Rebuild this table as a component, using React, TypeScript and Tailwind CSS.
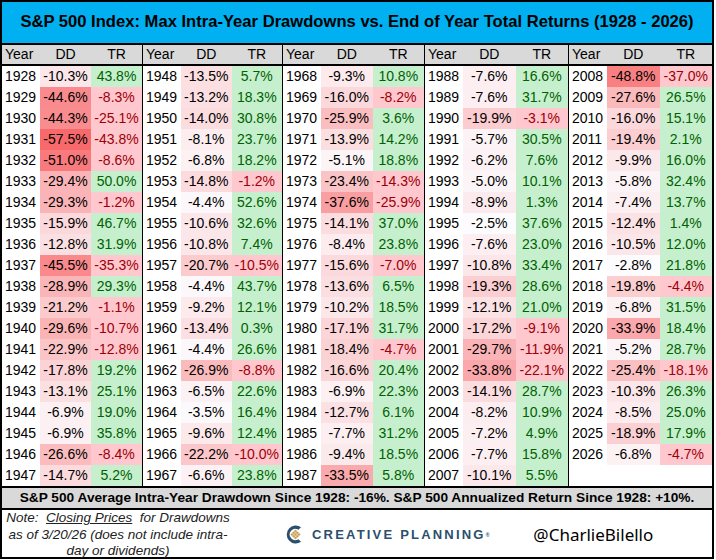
import React from 'react'

type Row = [number, number, number]

const DATA: Row[] = [
  [1928, -10.3, 43.8], [1929, -44.6, -8.3], [1930, -44.3, -25.1], [1931, -57.5, -43.8],
  [1932, -51.0, -8.6], [1933, -29.4, 50.0], [1934, -29.3, -1.2], [1935, -15.9, 46.7],
  [1936, -12.8, 31.9], [1937, -45.5, -35.3], [1938, -28.9, 29.3], [1939, -21.2, -1.1],
  [1940, -29.6, -10.7], [1941, -22.9, -12.8], [1942, -17.8, 19.2], [1943, -13.1, 25.1],
  [1944, -6.9, 19.0], [1945, -6.9, 35.8], [1946, -26.6, -8.4], [1947, -14.7, 5.2],
  [1948, -13.5, 5.7], [1949, -13.2, 18.3], [1950, -14.0, 30.8], [1951, -8.1, 23.7],
  [1952, -6.8, 18.2], [1953, -14.8, -1.2], [1954, -4.4, 52.6], [1955, -10.6, 32.6],
  [1956, -10.8, 7.4], [1957, -20.7, -10.5], [1958, -4.4, 43.7], [1959, -9.2, 12.1],
  [1960, -13.4, 0.3], [1961, -4.4, 26.6], [1962, -26.9, -8.8], [1963, -6.5, 22.6],
  [1964, -3.5, 16.4], [1965, -9.6, 12.4], [1966, -22.2, -10.0], [1967, -6.6, 23.8],
  [1968, -9.3, 10.8], [1969, -16.0, -8.2], [1970, -25.9, 3.6], [1971, -13.9, 14.2],
  [1972, -5.1, 18.8], [1973, -23.4, -14.3], [1974, -37.6, -25.9], [1975, -14.1, 37.0],
  [1976, -8.4, 23.8], [1977, -15.6, -7.0], [1978, -13.6, 6.5], [1979, -10.2, 18.5],
  [1980, -17.1, 31.7], [1981, -18.4, -4.7], [1982, -16.6, 20.4], [1983, -6.9, 22.3],
  [1984, -12.7, 6.1], [1985, -7.7, 31.2], [1986, -9.4, 18.5], [1987, -33.5, 5.8],
  [1988, -7.6, 16.6], [1989, -7.6, 31.7], [1990, -19.9, -3.1], [1991, -5.7, 30.5],
  [1992, -6.2, 7.6], [1993, -5.0, 10.1], [1994, -8.9, 1.3], [1995, -2.5, 37.6],
  [1996, -7.6, 23.0], [1997, -10.8, 33.4], [1998, -19.3, 28.6], [1999, -12.1, 21.0],
  [2000, -17.2, -9.1], [2001, -29.7, -11.9], [2002, -33.8, -22.1], [2003, -14.1, 28.7],
  [2004, -8.2, 10.9], [2005, -7.2, 4.9], [2006, -7.7, 15.8], [2007, -10.1, 5.5],
  [2008, -48.8, -37.0], [2009, -27.6, 26.5], [2010, -16.0, 15.1], [2011, -19.4, 2.1],
  [2012, -9.9, 16.0], [2013, -5.8, 32.4], [2014, -7.4, 13.7], [2015, -12.4, 1.4],
  [2016, -10.5, 12.0], [2017, -2.8, 21.8], [2018, -19.8, -4.4], [2019, -6.8, 31.5],
  [2020, -33.9, 18.4], [2021, -5.2, 28.7], [2022, -25.4, -18.1], [2023, -10.3, 26.3],
  [2024, -8.5, 25.0], [2025, -18.9, 17.9], [2026, -6.8, -4.7],
]

// excel white-red scale: min -57.5 -> #F8696B, max -2.5 -> #FCFCFF
function ddColor(v: number) {
  const t = (v + 57.5) / 55
  const r = Math.round(248 + (252 - 248) * t)
  const g = Math.round(105 + (252 - 105) * t)
  const b = Math.round(107 + (255 - 107) * t)
  return `rgb(${r},${g},${b})`
}

const groupWidths = ['w-[141px]', 'w-[140px]', 'w-[142px]', 'w-[144px]', 'flex-1']

function Group({ idx }: { idx: number }) {
  const rows = DATA.slice(idx * 20, idx * 20 + 20)
  const last = idx === 4
  return (
    <div className={`${groupWidths[idx]} flex flex-col ${last ? '' : 'border-r border-black'}`}>
      <div className="h-[21px] flex items-center bg-[#d9d9d9] border-b-2 border-black text-[14px]">
        <div className="w-[38px] pl-[3px]">Year</div>
        <div className="flex-1 text-center">DD</div>
        <div className="flex-1 text-center">TR</div>
      </div>
      {Array.from({ length: 20 }).map((_, i) => {
        const r = rows[i]
        if (!r) {
          return <div key={i} className="h-[21px] bg-white" />
        }
        const [y, dd, tr] = r
        return (
          <div key={i} className="h-[21px] flex items-stretch text-[14px] leading-[21px]">
            <div className="w-[38px] pl-[3px] bg-white text-black">{y}</div>
            <div className="flex-1 text-center text-black" style={{ backgroundColor: ddColor(dd) }}>
              {dd.toFixed(1)}%
            </div>
            <div
              className={`flex-1 text-center ${tr >= 0 ? 'bg-[#c6efce] text-[#006100]' : 'bg-[#ffc7ce] text-[#9c0006]'}`}
            >
              {tr.toFixed(1)}%
            </div>
          </div>
        )
      })}
    </div>
  )
}

function CpLogo() {
  return (
    <svg width="17" height="23" viewBox="0 0 17 23">
      <path d="M15 4.2 A9 9 0 1 0 15 18.8 L12.4 16.2 A5.6 5.6 0 1 1 12.4 6.8 Z" fill="#2b4f6d" />
      <g transform="translate(9.5 11.5) rotate(45)">
        <rect x="-3.6" y="-3.6" width="7.2" height="7.2" fill="#c8a25a" />
        <path d="M-3.6 -1.2 H3.6 M-3.6 1.2 H3.6 M-1.2 -3.6 V3.6 M1.2 -3.6 V3.6" stroke="#f3e6c8" strokeWidth="0.6" />
      </g>
    </svg>
  )
}

export default function App() {
  return (
    <div className="w-[716px] h-[560px] bg-white font-['Liberation_Sans',Arial,sans-serif] text-black">
      <div className="w-[714px] h-[559px] border-2 border-black flex flex-col">
        {/* title */}
        <div className="h-[43px] shrink-0 bg-[#00b0f0] border-b-2 border-black flex items-center justify-center text-[16.6px] font-bold">
          S&amp;P 500 Index: Max Intra-Year Drawdowns vs. End of Year Total Returns (1928 - 2026)
        </div>

        {/* table */}
        <div className="flex shrink-0">
          {[0, 1, 2, 3, 4].map((g) => (
            <Group key={g} idx={g} />
          ))}
        </div>

        {/* summary */}
        <div className="h-[24px] shrink-0 bg-[#d9d9d9] border-y-2 border-black flex items-center justify-center text-[13.7px] font-bold whitespace-nowrap">
          S&amp;P 500 Average Intra-Year Drawdown Since 1928: -16%. S&amp;P 500 Annualized Return Since 1928: +10%.
        </div>

        {/* footer */}
        <div className="flex-1 flex items-center">
          <div className="w-[228px] pl-[4px] text-center italic text-[13.5px] leading-[16.5px] text-[#222] whitespace-pre">
            {'Note:  '}
            <span className="underline">Closing Prices</span>
            {'  for Drawdowns'}
            <br />
            as of 3/20/26 (does not include intra-
            <br />
            day or dividends)
          </div>
          <div className="ml-[56px] flex items-center gap-[9px]">
            <CpLogo />
            <span className="text-[13px] font-bold tracking-[2.2px] text-[#2b4f6d]">
              CREATIVE PLANNING<sup className="text-[5px] tracking-normal">®</sup>
            </span>
          </div>
          <div className="ml-[44px] text-[17px] font-['Noto_Sans',sans-serif]">@CharlieBilello</div>
        </div>
      </div>
    </div>
  )
}
